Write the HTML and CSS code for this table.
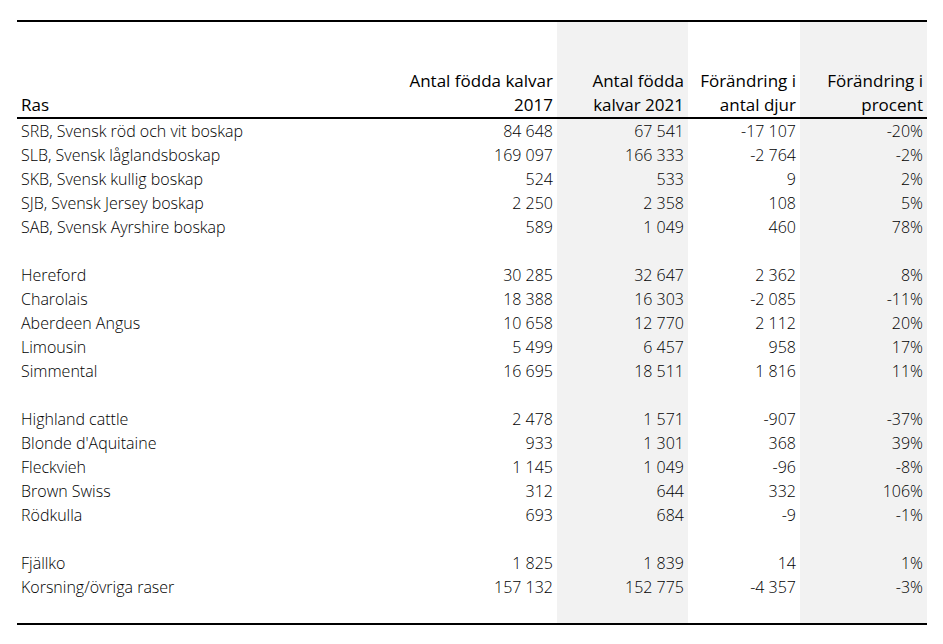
FILE: index.html
```html
<!DOCTYPE html>
<html lang="sv">
<head>
<meta charset="utf-8">
<link rel="stylesheet" href="styles.css">
</head>
<body>
<table class="tbl">
<colgroup>
<col class="c-ras"><col class="c-a"><col class="c-b shade"><col class="c-c"><col class="c-d shade">
</colgroup>
<thead>
<tr>
<th class="l">Ras</th>
<th>Antal födda kalvar 2017</th>
<th class="sh">Antal födda kalvar 2021</th>
<th>Förändring i antal djur</th>
<th class="sh">Förändring i procent</th>
</tr>
</thead>
<tbody>
<tr><td class="l">SRB, Svensk röd och vit boskap</td><td>84 648</td><td class="sh">67 541</td><td>-17 107</td><td class="sh">-20%</td></tr>
<tr><td class="l">SLB, Svensk låglandsboskap</td><td>169 097</td><td class="sh">166 333</td><td>-2 764</td><td class="sh">-2%</td></tr>
<tr><td class="l">SKB, Svensk kullig boskap</td><td>524</td><td class="sh">533</td><td>9</td><td class="sh">2%</td></tr>
<tr><td class="l">SJB, Svensk Jersey boskap</td><td>2 250</td><td class="sh">2 358</td><td>108</td><td class="sh">5%</td></tr>
<tr><td class="l">SAB, Svensk Ayrshire boskap</td><td>589</td><td class="sh">1 049</td><td>460</td><td class="sh">78%</td></tr>
<tr><td class="l"></td><td></td><td class="sh"></td><td></td><td class="sh"></td></tr>
<tr><td class="l">Hereford</td><td>30 285</td><td class="sh">32 647</td><td>2 362</td><td class="sh">8%</td></tr>
<tr><td class="l">Charolais</td><td>18 388</td><td class="sh">16 303</td><td>-2 085</td><td class="sh">-11%</td></tr>
<tr><td class="l">Aberdeen Angus</td><td>10 658</td><td class="sh">12 770</td><td>2 112</td><td class="sh">20%</td></tr>
<tr><td class="l">Limousin</td><td>5 499</td><td class="sh">6 457</td><td>958</td><td class="sh">17%</td></tr>
<tr><td class="l">Simmental</td><td>16 695</td><td class="sh">18 511</td><td>1 816</td><td class="sh">11%</td></tr>
<tr><td class="l"></td><td></td><td class="sh"></td><td></td><td class="sh"></td></tr>
<tr><td class="l">Highland cattle</td><td>2 478</td><td class="sh">1 571</td><td>-907</td><td class="sh">-37%</td></tr>
<tr><td class="l">Blonde d'Aquitaine</td><td>933</td><td class="sh">1 301</td><td>368</td><td class="sh">39%</td></tr>
<tr><td class="l">Fleckvieh</td><td>1 145</td><td class="sh">1 049</td><td>-96</td><td class="sh">-8%</td></tr>
<tr><td class="l">Brown Swiss</td><td>312</td><td class="sh">644</td><td>332</td><td class="sh">106%</td></tr>
<tr><td class="l">Rödkulla</td><td>693</td><td class="sh">684</td><td>-9</td><td class="sh">-1%</td></tr>
<tr><td class="l"></td><td></td><td class="sh"></td><td></td><td class="sh"></td></tr>
<tr><td class="l">Fjällko</td><td>1 825</td><td class="sh">1 839</td><td>14</td><td class="sh">1%</td></tr>
<tr><td class="l">Korsning/övriga raser</td><td>157 132</td><td class="sh">152 775</td><td>-4 357</td><td class="sh">-3%</td></tr>
<tr class="last"><td class="l"></td><td></td><td class="sh"></td><td></td><td class="sh"></td></tr>
</tbody>
</table>
</body>
</html>
```
FILE: styles.css
```css
html, body {
  margin: 0;
  padding: 0;
  background: #fff;
}
body {
  padding: 20px 0 0 17px;
  font-family: "Open Sans", "Liberation Sans", sans-serif;
  color: #000;
}
.tbl {
  border-collapse: collapse;
  table-layout: fixed;
  width: 910px;
  border-top: 2px solid #000;
  border-bottom: 2px solid #000;
}
.c-ras { width: 378px; }
.c-a { width: 162px; }
.c-b { width: 131px; }
.c-c { width: 112px; }
.c-d { width: 127px; }
.sh { background: #f2f2f2; }
th {
  font-weight: 400;
  font-size: 17px;
  line-height: 24px;
  height: 95px;
  vertical-align: bottom;
  text-align: right;
  padding: 0 4px;
  border-bottom: 2px solid #000;
}
td {
  font-weight: 300;
  font-size: 16px;
  line-height: 24px;
  height: 24px;
  padding: 0 4px;
  text-align: right;
  white-space: nowrap;
}
.l { text-align: left; }
```
